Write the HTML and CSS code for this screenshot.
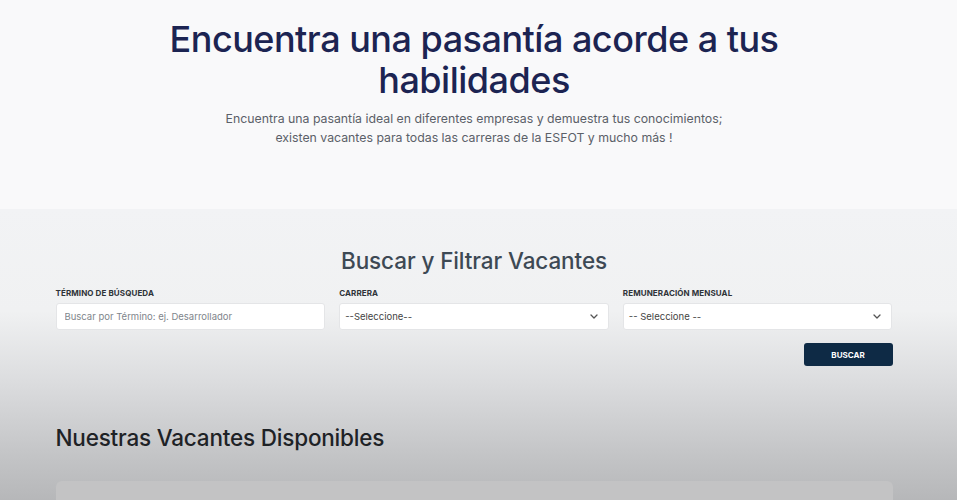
FILE: index.html
```html
<!DOCTYPE html>
<html lang="es">
<head>
    <meta charset="UTF-8">
    <meta name="viewport" content="width=device-width, initial-scale=1.0">
    <title>Pasantías ESFOT</title>
    <link rel="stylesheet" href="styles.css">
</head>
<body>
    <section class="hero">
        <h1>Encuentra una pasantía acorde a tus habilidades</h1>
        <p class="hero-text">Encuentra una pasantía ideal en diferentes empresas y demuestra tus conocimientos;<br>existen vacantes para todas las carreras de la ESFOT y mucho más !</p>
    </section>

    <section class="main">
        <div class="container">
            <h2 class="search-title">Buscar y Filtrar Vacantes</h2>
            <form class="filters">
                <div class="field">
                    <label>Término de búsqueda</label>
                    <input type="text" placeholder="Buscar por Término: ej. Desarrollador">
                </div>
                <div class="field">
                    <label>Carrera</label>
                    <div class="select">
                        <span>--Seleccione--</span>
                        <svg width="8" height="5" viewBox="0 0 8 5"><path d="M1 1l3 3 3-3" fill="none" stroke="#555" stroke-width="1.3" stroke-linecap="round" stroke-linejoin="round"/></svg>
                    </div>
                </div>
                <div class="field">
                    <label>Remuneración mensual</label>
                    <div class="select">
                        <span>-- Seleccione --</span>
                        <svg width="8" height="5" viewBox="0 0 8 5"><path d="M1 1l3 3 3-3" fill="none" stroke="#555" stroke-width="1.3" stroke-linecap="round" stroke-linejoin="round"/></svg>
                    </div>
                </div>
            </form>
            <div class="actions">
                <button type="button" class="btn">Buscar</button>
            </div>

            <h2 class="list-title">Nuestras Vacantes Disponibles</h2>
            <div class="card"></div>
        </div>
    </section>
</body>
</html>
```

FILE: styles.css
```css
* {
    margin: 0;
    padding: 0;
    box-sizing: border-box;
}

body {
    font-family: Inter, "Noto Sans", sans-serif;
    background: #b6b7b9;
    height: 500px;
    overflow: hidden;
}

.hero {
    background: #f9f9fa;
    height: 209px;
    padding: 19px 9px 0 0;
    text-align: center;
}

.hero h1 {
    font-size: 36px;
    font-weight: 500;
    line-height: 41px;
    letter-spacing: -0.5px;
    color: #1c2452;
    max-width: 640px;
    margin: 0 auto;
}

.hero-text {
    margin-top: 8px;
    font-size: 12.3px;
    line-height: 19px;
    color: #5b6068;
}

.main {
    height: 291px;
    padding-right: 9px;
    overflow: hidden;
    background: linear-gradient(180deg, #f2f3f5 0%, #f0f1f2 35%, #dbdcde 60%, #c3c4c6 85%, #b6b7b9 100%);
}

.container {
    width: 837px;
    margin: 0 auto;
    padding-top: 37px;
}

.search-title {
    text-align: center;
    font-size: 22.5px;
    font-weight: 500;
    color: #3d4954;
    letter-spacing: -0.1px;
    line-height: 30px;
}

.filters {
    display: grid;
    grid-template-columns: repeat(3, 1fr);
    gap: 14px;
    margin-top: 12px;
}

.field label {
    display: block;
    font-size: 8px;
    font-weight: 700;
    text-transform: uppercase;
    color: #2e3338;
    margin-bottom: 5px;
    letter-spacing: 0.1px;
}

.field input,
.select {
    width: 100%;
    height: 27px;
    border: 1px solid #e4e5e7;
    border-radius: 3px;
    background: #fff;
    font-family: inherit;
    font-size: 9.5px;
    padding: 0 8px;
    color: #444;
}

.field input::placeholder {
    color: #80858b;
}

.select {
    display: flex;
    align-items: center;
    justify-content: space-between;
    padding: 0 10px 0 5px;
}

.actions {
    display: flex;
    justify-content: flex-end;
    margin-top: 13px;
}

.btn {
    width: 89px;
    height: 23px;
    background: #0e2a45;
    color: #fff;
    border: none;
    border-radius: 3px;
    font-family: inherit;
    font-size: 8px;
    font-weight: 700;
    text-transform: uppercase;
}

.list-title {
    margin-top: 58px;
    font-size: 22.5px;
    font-weight: 500;
    color: #1e2226;
    letter-spacing: -0.2px;
    line-height: 28px;
}

.card {
    margin-top: 29px;
    height: 19px;
    background: #c3c3c4;
    border-radius: 6px 6px 0 0;
}
```
